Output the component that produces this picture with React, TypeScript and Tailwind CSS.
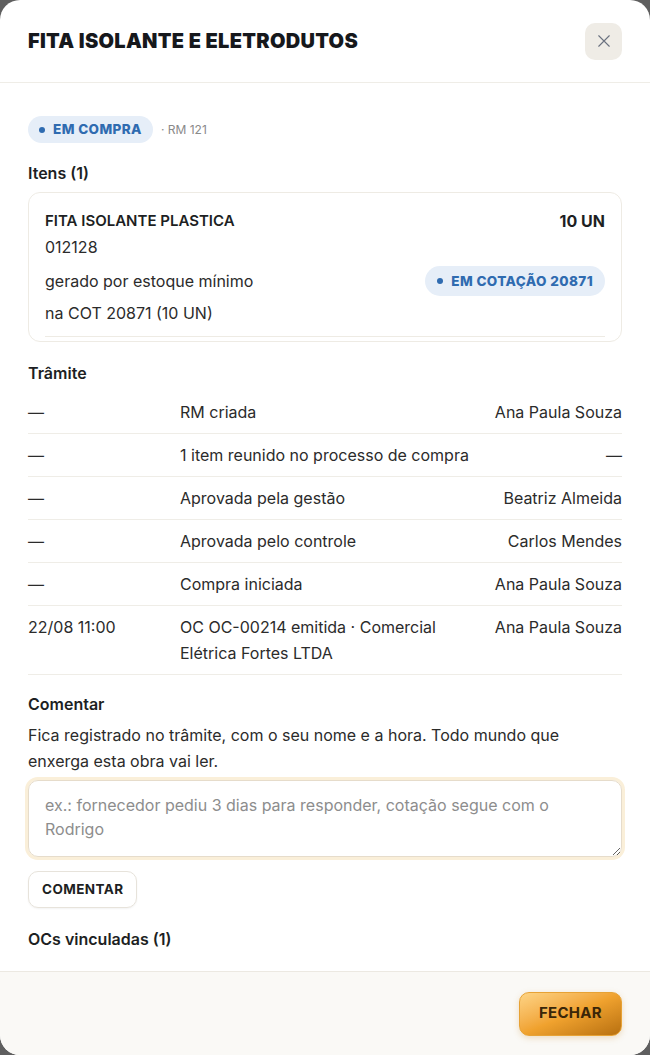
import React from 'react';

const tramite = [
  { date: '—', event: 'RM criada', who: 'Ana Paula Souza' },
  { date: '—', event: '1 item reunido no processo de compra', who: '—' },
  { date: '—', event: 'Aprovada pela gestão', who: 'Beatriz Almeida' },
  { date: '—', event: 'Aprovada pelo controle', who: 'Carlos Mendes' },
  { date: '—', event: 'Compra iniciada', who: 'Ana Paula Souza' },
  { date: '22/08 11:00', event: 'OC OC-00214 emitida · Comercial Elétrica Fortes LTDA', who: 'Ana Paula Souza' },
];

const Badge: React.FC<{ label: string; tall?: boolean }> = ({ label, tall }) => (
  <span
    className={
      tall
        ? 'inline-flex h-[30px] items-center gap-[8px] rounded-full bg-[#e6eef8] px-[12px] text-[13.5px] font-extrabold tracking-[0.03em] text-[#2f6bb0]'
        : 'inline-flex h-[27px] items-center gap-[8px] rounded-full bg-[#e6eef8] px-[11px] text-[13.5px] font-extrabold tracking-[0.03em] text-[#2f6bb0]'
    }
  >
    <span className="h-[6px] w-[6px] rounded-full bg-[#2f6bb0]" />
    {label}
  </span>
);

const App: React.FC = () => {
  return (
    <div className="h-[1055px] w-[650px] bg-[#5f5f5f]" style={{ fontFamily: 'Inter, "Noto Sans", sans-serif' }}>
      <div className="flex h-full flex-col overflow-hidden rounded-[20px] bg-white text-[#2b2b2b]">
        {/* header */}
        <div className="flex h-[83px] shrink-0 items-center justify-between border-b border-[#efede7] px-[28px]">
          <h1 className="text-[20px] font-black tracking-[0.015em] text-[#16181c]">FITA ISOLANTE E ELETRODUTOS</h1>
          <button className="flex h-[37px] w-[37px] items-center justify-center rounded-[10px] bg-[#efece6] text-[#6b7280]">
            <svg width="18" height="18" viewBox="0 0 24 24" fill="none" stroke="currentColor" strokeWidth="1.5" strokeLinecap="round">
              <path d="M5 5l14 14M19 5L5 19" />
            </svg>
          </button>
        </div>

        {/* body */}
        <div className="flex-1 overflow-hidden px-[28px] pt-[33px]">
          <div className="flex items-center gap-[8px]">
            <Badge label="EM COMPRA" />
            <span className="text-[12px] text-[#8a8a8a]">· RM 121</span>
          </div>

          <h2 className="mt-[18px] text-[16px] font-semibold text-[#1d1f23]">Itens (1)</h2>
          <div className="mt-[7px] rounded-[12px] border border-[#eeebe4] px-[16px] pt-[16px]">
            <div className="border-b border-[#eeebe4] pb-[10px]">
              <div className="flex items-center justify-between">
                <span className="text-[15px] font-semibold text-[#1d1f23]">FITA ISOLANTE PLASTICA</span>
                <span className="text-[16px] font-bold text-[#1d1f23]">10 UN</span>
              </div>
              <div className="mt-[1px] text-[16px] leading-[26px]">012128</div>
              <div className="mt-[6px] flex items-center justify-between">
                <span className="text-[16px] leading-[26px]">gerado por estoque mínimo</span>
                <Badge label="EM COTAÇÃO 20871" tall />
              </div>
              <div className="mt-[4px] text-[16px] leading-[26px]">na COT 20871 (10 UN)</div>
            </div>
            <div className="h-[4px]" />
          </div>

          <h2 className="mt-[19px] text-[16px] font-semibold text-[#1d1f23]">Trâmite</h2>
          <div className="mt-[6px]">
            {tramite.map((r, i) => (
              <div key={i} className="grid grid-cols-[144px_1fr_auto] gap-x-[8px] border-b border-[#efede7] py-[8px] text-[16px] leading-[26px]">
                <span>{r.date}</span>
                <span className="pr-[8px]">{r.event}</span>
                <span className="text-right">{r.who}</span>
              </div>
            ))}
          </div>

          <h2 className="mt-[17px] text-[16px] font-semibold text-[#1d1f23]">Comentar</h2>
          <p className="mt-[6px] text-[16px] leading-[26px]">
            Fica registrado no trâmite, com o seu nome e a hora. Todo mundo que enxerga esta obra vai ler.
          </p>
          <textarea
            className="mt-[6px] block h-[77px] w-full rounded-[10px] border border-[#e6dccb] px-[16px] py-[12px] text-[16px] leading-[24px] text-[#2b2b2b] outline-none ring-[3px] ring-[#faefd9] placeholder:text-[#8d8d8d]"
            placeholder="ex.: fornecedor pediu 3 dias para responder, cotação segue com o Rodrigo"
          />
          <button className="mt-[14px] h-[37px] rounded-[10px] border border-[#e7e3db] px-[13px] text-[13.5px] font-bold tracking-[0.03em] text-[#1d1f23] shadow-[0_1px_2px_rgba(0,0,0,0.05)]">
            COMENTAR
          </button>

          <h2 className="mt-[19px] text-[16px] font-semibold text-[#1d1f23]">OCs vinculadas (1)</h2>
          <div className="mt-[17px] grid grid-cols-[1fr_1fr_1fr] text-[16px] leading-[26px]">
            <span>OC-00214</span>
            <span>Comercial Elétrica</span>
            <span className="text-right">R$ 1.240,00</span>
          </div>
        </div>

        {/* footer */}
        <div className="flex h-[84px] shrink-0 items-center justify-end border-t border-[#ece9e2] bg-[#faf9f6] px-[28px]">
          <button className="h-[44px] rounded-[10px] border border-[#e7a235] bg-gradient-to-br from-[#fdd484] via-[#f0a22e] to-[#b8700f] px-[19px] text-[15px] font-bold tracking-[0.02em] text-[#3a2608] shadow-[0_2px_6px_rgba(200,130,30,0.25)]">
            FECHAR
          </button>
        </div>
      </div>
    </div>
  );
};

export default App;
